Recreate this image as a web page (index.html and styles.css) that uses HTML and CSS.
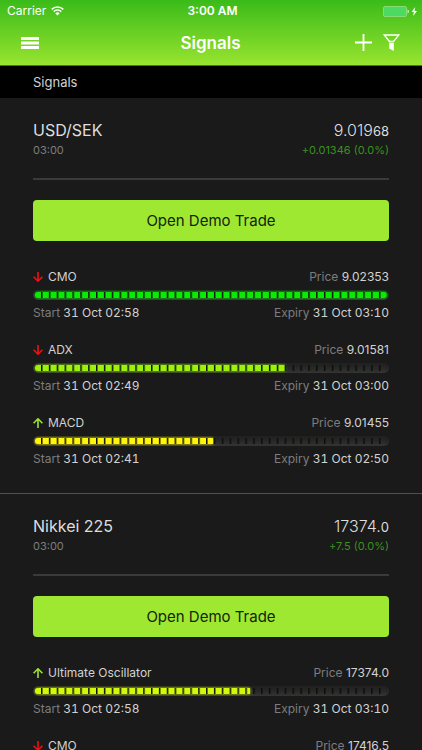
FILE: index.html
```
<!DOCTYPE html>
<html lang="en">
<head>
  <meta charset="UTF-8" />
  <meta name="viewport" content="width=device-width, initial-scale=1.0" />
  <title>Signals</title>
  <link rel="stylesheet" href="styles.css">
</head>
<body>
  <svg class="sprite" aria-hidden="true">
    <symbol id="down" viewBox="0 0 10 10">
      <path d="M5 0v9M0.6 4.800L5 9.200L9.400 4.800" />
    </symbol>
    <symbol id="up" viewBox="0 0 10 10">
      <path d="M5 10V1M0.6 5.200L5 0.800L9.400 5.200" />
    </symbol>
  </svg>

  <header class="topbar">
    <div class="status">
      <div class="carrier">
        <span>Carrier</span>
        <svg width="13" height="10" viewBox="0 0 13 10" fill="none" stroke="#fff" stroke-width="1.5">
          <path d="M0.7 3.4a8.2 8.2 0 0 1 11.6 0" />
          <path d="M2.7 5.6a5.4 5.4 0 0 1 7.6 0" />
          <path d="M4.3 7.3a3.1 3.1 0 0 1 4.4 0L6.5 9.6z" fill="#fff" stroke="none" />
        </svg>
      </div>
      <strong class="clock">3:00 AM</strong>
      <div class="battery">
        <svg width="35" height="11" viewBox="0 0 35 11">
          <rect x="0.5" y="0.5" width="23" height="10" rx="1.5" fill="#4cd964" stroke="#86dc73" />
          <path d="M24.5 3.5q1.5 0.5 1.5 2t-1.5 2z" fill="#c8f2b0" />
          <path d="M32.2 1L28.6 6h2.3L30 10l4-5h-2.500z" fill="#fff" />
        </svg>
      </div>
    </div>
    <nav class="nav">
      <button class="icon-btn" aria-label="Menu">
        <svg width="18" height="12" viewBox="0 0 18 12" fill="#fff">
          <path d="M0 0h18v3H0zM0 4.500h18v3H0zM0 9h18v3H0z" />
        </svg>
      </button>
      <h1>Signals</h1>
      <div class="actions">
        <button class="icon-btn" aria-label="Add">
          <svg width="17" height="17" viewBox="0 0 17 17" stroke="#fff" stroke-width="1.8">
            <path d="M8.500 0v17M0 8.500h17" />
          </svg>
        </button>
        <button class="icon-btn" aria-label="Filter">
          <svg width="17" height="17" viewBox="0 0 17 17">
            <path d="M1.200 1h14.600L10.500 7.500h-4z" fill="none" stroke="#fff" stroke-width="1.300" />
            <path d="M6.200 8.800h4.600V17L6.200 14.500z" fill="#fff" />
          </svg>
        </button>
      </div>
    </nav>
  </header>

  <h2 class="strip">Signals</h2>

  <main>
    <section class="market">
      <div class="market-head">
        <div>
          <h3>USD/SEK</h3>
          <p class="time">03:00</p>
        </div>
        <div class="quote">
          <p class="rate">9.019<small>68</small></p>
          <p class="change">+0.01346 (0.0%)</p>
        </div>
      </div>
      <button class="trade">Open Demo Trade</button>
      <div class="signals">
        <article class="signal green">
          <div class="row">
            <span class="name"><svg class="arrow down"><use href="#down" /></svg>CMO</span>
            <span class="info">Price <b>9.02353</b></span>
          </div>
          <div class="bar"><div class="fill" style="width: 100%"></div></div>
          <div class="row dates">
            <span class="info">Start <b>31 Oct 02:58</b></span>
            <span class="info">Expiry <b>31 Oct 03:10</b></span>
          </div>
        </article>
        <article class="signal lime">
          <div class="row">
            <span class="name"><svg class="arrow down"><use href="#down" /></svg>ADX</span>
            <span class="info">Price <b>9.01581</b></span>
          </div>
          <div class="bar"><div class="fill" style="width: 71%"></div></div>
          <div class="row dates">
            <span class="info">Start <b>31 Oct 02:49</b></span>
            <span class="info">Expiry <b>31 Oct 03:00</b></span>
          </div>
        </article>
        <article class="signal yellow">
          <div class="row">
            <span class="name"><svg class="arrow up"><use href="#up" /></svg>MACD</span>
            <span class="info">Price <b>9.01455</b></span>
          </div>
          <div class="bar"><div class="fill" style="width: 50.5%"></div></div>
          <div class="row dates">
            <span class="info">Start <b>31 Oct 02:41</b></span>
            <span class="info">Expiry <b>31 Oct 02:50</b></span>
          </div>
        </article>
      </div>
    </section>

    <section class="market">
      <div class="market-head">
        <div>
          <h3>Nikkei 225</h3>
          <p class="time">03:00</p>
        </div>
        <div class="quote">
          <p class="rate">17374.<small>0</small></p>
          <p class="change">+7.5 (0.0%)</p>
        </div>
      </div>
      <button class="trade">Open Demo Trade</button>
      <div class="signals">
        <article class="signal citrus">
          <div class="row">
            <span class="name"><svg class="arrow up"><use href="#up" /></svg>Ultimate Oscillator</span>
            <span class="info">Price <b>17374.0</b></span>
          </div>
          <div class="bar"><div class="fill" style="width: 61%"></div></div>
          <div class="row dates">
            <span class="info">Start <b>31 Oct 02:58</b></span>
            <span class="info">Expiry <b>31 Oct 03:10</b></span>
          </div>
        </article>
        <article class="signal citrus">
          <div class="row">
            <span class="name"><svg class="arrow down"><use href="#down" /></svg>CMO</span>
            <span class="info">Price <b>17416.5</b></span>
          </div>
        </article>
      </div>
    </section>
  </main>
</body>
</html>
```
FILE: styles.css
```
* {
  box-sizing: border-box;
}
html {
  height: 100%;
}
body {
  margin: 0;
  height: 100%;
  overflow: hidden;
  display: flex;
  flex-direction: column;
  background: #1a1a1a;
  color: #d2d2d2;
  font-family: Inter, "Liberation Sans", sans-serif;
  font-size: 12px;
  line-height: 18px;
}
h1, h2, h3, p {
  margin: 0;
  font-weight: 400;
}
button {
  font-family: inherit;
  border: none;
  cursor: pointer;
}
svg {
  display: block;
}
.sprite {
  width: 0;
  height: 0;
  position: absolute;
}

/* top bar */
.topbar {
  flex: none;
  background: linear-gradient(#3abb19, #98e42f);
  border-bottom: 1px solid #3f7d0c;
  color: #fff;
}
.status {
  display: grid;
  grid-template-columns: 1fr auto 1fr;
  align-items: center;
  height: 22px;
  padding: 0 4px 0 7px;
}
.carrier {
  display: flex;
  align-items: center;
  gap: 5px;
}
.clock {
  font-weight: 600;
}
.battery {
  justify-self: end;
}
.nav {
  display: grid;
  grid-template-columns: 1fr auto 1fr;
  align-items: center;
  height: 43px;
  padding: 0 22px 2px 21px;
}
.nav h1 {
  font-size: 17px;
  font-weight: 600;
}
.icon-btn {
  padding: 0;
  background: none;
}
.actions {
  display: flex;
  justify-content: flex-end;
  gap: 11px;
}
.strip {
  flex: none;
  padding: 7px 33px;
  background: #000;
  font-size: 13px;
}

/* market block */
.market {
  padding: 21px 33px 25px;
  border-bottom: 1px solid #505050;
}
.market-head {
  display: flex;
  justify-content: space-between;
  padding-bottom: 19px;
  border-bottom: 2px solid #3a3a3a;
}
.market-head h3, .rate {
  font-size: 16px;
  line-height: 22px;
  color: #dedede;
}
.rate {
  font-weight: 300;
}
.rate small {
  font-size: 13px;
  font-weight: 400;
  line-height: 1;
}
.quote {
  text-align: right;
}
.time, .change {
  font-size: 11px;
}
.time {
  color: #7d7d7d;
}
.change {
  color: #38921c;
}
.trade {
  width: 100%;
  height: 41px;
  margin: 20px 0 27px;
  border-radius: 4px;
  background: #9fe832;
  color: #14230a;
  font-size: 15px;
}

/* signal rows */
.signals {
  display: flex;
  flex-direction: column;
  gap: 19px;
}
.row {
  display: flex;
  justify-content: space-between;
}
.dates {
  font-variant-numeric: tabular-nums;
}
.name {
  display: flex;
  align-items: center;
  gap: 5px;
}
.info {
  color: #7d7d7d;
}
.info b {
  font-weight: 400;
  color: #d2d2d2;
}
.arrow {
  width: 10px;
  height: 10px;
  fill: none;
  stroke-width: 1.6;
}
.arrow.down {
  stroke: #f01010;
}
.arrow.up {
  stroke: #9be236;
}
.green { --led: #0bea05; }
.lime { --led: #9bf20a; }
.yellow { --led: #fff50a; }
.citrus { --led: #d3f80a; }

.bar {
  position: relative;
  height: 10px;
  margin: 4px 0;
  padding: 2px;
  border-radius: 5px;
  background: linear-gradient(#202020, #272727 50%, #353535);
  overflow: hidden;
}
.fill {
  height: 6px;
  border-radius: 3px 0 0 3px;
  background: var(--led);
  box-shadow: 0 0 3px var(--led), 8px 0 14px -4px var(--led);
}
.green .fill {
  border-radius: 3px;
}
/* dark ticks, 45 cells over the whole bar */
.bar::after {
  content: "";
  position: absolute;
  inset: 2px 2px 2px 8px;
  background: linear-gradient(90deg, #0b0f06 1px, transparent 2px) 0 0 / calc(100% / 44) 100%;
}
```
